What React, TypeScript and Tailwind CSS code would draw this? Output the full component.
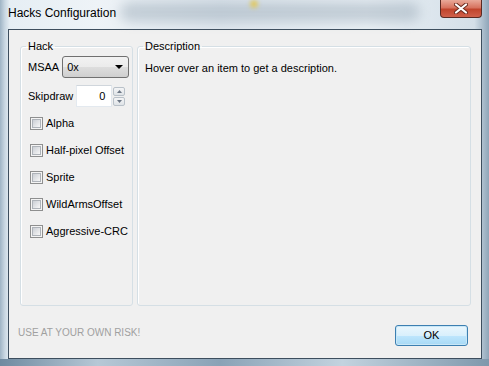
import React from 'react';

const font = "font-['Liberation_Sans',Arial,sans-serif]";

const hacks = ['Alpha', 'Half-pixel Offset', 'Sprite', 'WildArmsOffset', 'Aggressive-CRC'];

const CheckBox: React.FC<{ label: string }> = ({ label }) => (
  <div className="flex items-center h-[13px]">
    <div className="w-[13px] h-[13px] border border-[#8e8f8f] bg-[#f4f4f4] p-[1px] shrink-0">
      <div className="w-full h-full border border-[#aeb3b9] bg-[linear-gradient(135deg,#cbcfd5,#f7f7f7)]"></div>
    </div>
    <span className="ml-[3px] text-[11px] leading-[13px] text-black">{label}</span>
  </div>
);

const SpinArrow: React.FC<{ up?: boolean }> = ({ up }) => (
  <div className="w-[12px] h-[9px] border border-[#b9c1c9] rounded-[2px] bg-[linear-gradient(#f4f5f6,#dfe3e7)] flex items-center justify-center">
    <svg width="5" height="3" viewBox="0 0 5 3">
      {up ? <path d="M0 3 L2.5 0 L5 3 Z" fill="#6d7785" /> : <path d="M0 0 L2.5 3 L5 0 Z" fill="#6d7785" />}
    </svg>
  </div>
);

const App: React.FC = () => {
  return (
    <div className={`${font} w-[489px] h-[366px] overflow-hidden relative bg-[linear-gradient(90deg,#9fb4c5_0%,#c9d7e2_1%,#e6eef4_2%,#eef3f7_20%,#dfe7ee_45%,#eaf0f5_75%,#d4dfe8_97%,#8fa6b9_100%)]`}>
      {/* blurred background shapes behind glass */}
      <div className="absolute left-[120px] top-[2px] w-[300px] h-[20px] rounded-full bg-[#8a9cab] opacity-40 blur-[6px]"></div>
      <div className="absolute left-[250px] top-[0px] w-[8px] h-[8px] rounded-full bg-[#e4c64a] opacity-80 blur-[2px]"></div>
      <div className="absolute left-[0px] top-[359px] w-[489px] h-[7px] bg-[linear-gradient(90deg,#6f8aa0,#b6c8d6_20%,#8aa2b6_45%,#c3d3df_70%,#7f98ac)]"></div>

      {/* title bar */}
      <div className="relative h-[29px] pl-[8px] pt-[6px] text-[12px] leading-[15px] text-black">
        Hacks Configuration
        <div className="absolute right-[7px] top-0 w-[42px] h-[18px] rounded-b-[4px] border border-t-0 border-[#5b2a22] bg-[linear-gradient(#e9a999,#d7735f_45%,#c0442c_55%,#d0604a)] flex items-center justify-center">
          <svg width="14" height="11" viewBox="0 0 14 11">
            <path d="M2 1.5 L12 9.5 M12 1.5 L2 9.5" stroke="#6a2a1e" strokeWidth="4" strokeLinecap="round" />
            <path d="M2 1.5 L12 9.5 M12 1.5 L2 9.5" stroke="#ffffff" strokeWidth="2.2" strokeLinecap="round" />
          </svg>
        </div>
      </div>

      {/* client area */}
      <div className="ml-[8px] w-[474px] h-[330px] border border-[#3d4e5e] bg-[#f0f0f0] flex flex-col">
        <div className="flex pl-[11px] pt-[10px] gap-[4px]">
          <fieldset className="w-[113px] min-w-0 shrink-0 h-[266px] border border-[#d5dfe5] rounded-[3px] shadow-[inset_1px_1px_0_#ffffff] pl-[7px] pr-[2px]">
            <legend className="ml-[-2px] px-[2px] text-[11px] leading-[13px] text-black">Hack</legend>
            <div className="flex items-center mt-[3px]">
              <span className="text-[11px] leading-[13px]">MSAA</span>
              <div className="ml-[3px] w-[67px] h-[22px] border border-[#707070] rounded-[3px] bg-[linear-gradient(#f2f2f2_0%,#ebebeb_50%,#dddddd_51%,#cfcfcf_100%)] flex items-center pl-[4px] pr-[5px]">
                <span className="text-[11px] leading-[13px] flex-1">0x</span>
                <svg width="8" height="4" viewBox="0 0 8 4">
                  <path d="M0 0 L8 0 L4 4 Z" fill="#000000" />
                </svg>
              </div>
            </div>
            <div className="flex items-center mt-[7px]">
              <span className="text-[11px] leading-[13px]">Skipdraw</span>
              <div className="ml-[3px] w-[36px] h-[22px] border border-[#e3e9ef] border-t-[#d0d6dc] bg-white flex items-center justify-end pr-[6px]">
                <span className="text-[11px] leading-[13px]">0</span>
              </div>
              <div className="ml-[1px] flex flex-col gap-[1px]">
                <SpinArrow up />
                <SpinArrow />
              </div>
            </div>
            <div className="flex flex-col gap-[14px] mt-[10px] ml-[2px]">
              {hacks.map((h) => (
                <CheckBox key={h} label={h} />
              ))}
            </div>
          </fieldset>

          <fieldset className="w-[334px] min-w-0 shrink-0 h-[266px] border border-[#d5dfe5] rounded-[3px] shadow-[inset_1px_1px_0_#ffffff] px-[7px]">
            <legend className="ml-[-2px] px-[2px] text-[11px] leading-[13px] text-black">Description</legend>
            <p className="mt-[9px] text-[11px] leading-[13px] text-black">Hover over an item to get a description.</p>
          </fieldset>
        </div>

        <div className="flex items-center justify-between pl-[9px] pr-[13px] mt-[19px]">
          <span className="mb-[7px] text-[10px] leading-[13px] text-[#a0a0a0]">USE AT YOUR OWN RISK!</span>
          <button className="w-[73px] h-[21px] rounded-[3px] border border-[#3c7fb1] bg-[linear-gradient(#eaf6fd_0%,#d9f0fc_50%,#bee6fd_51%,#a7d9f5_100%)] shadow-[inset_0_0_0_1px_#c8e7f7] text-[11px] leading-[13px] text-black">
            OK
          </button>
        </div>
      </div>
    </div>
  );
};

export default App;
